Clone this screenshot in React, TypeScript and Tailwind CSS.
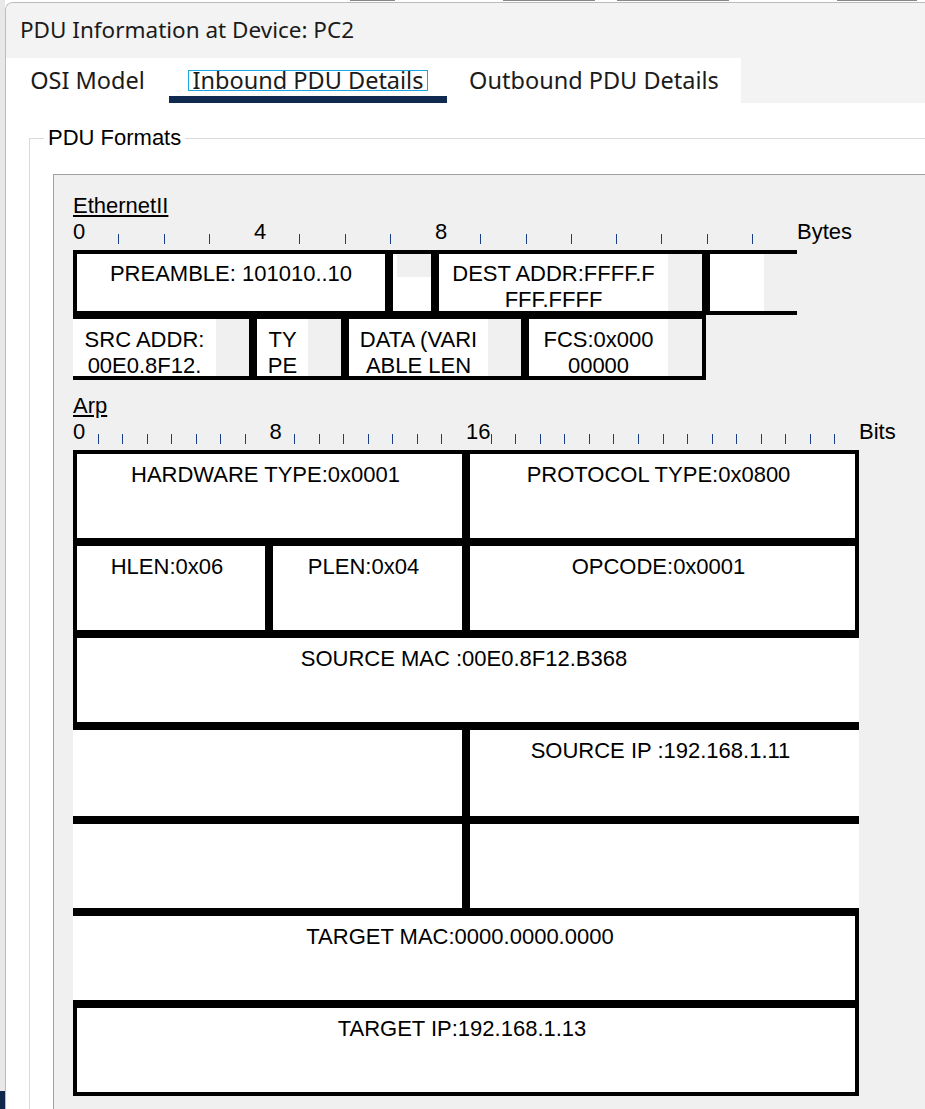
import React from 'react';

const ETH_LABELS: Record<number, string> = { 0: '0', 4: '4', 8: '8' };
const ARP_LABELS: Record<number, string> = { 0: '0', 8: '8', 16: '16' };

interface RulerProps {
    count: number;
    slot: string;
    labels: Record<number, string>;
    unit: string;
}

// one slot per byte/bit, label or tick at its left edge
const Ruler: React.FC<RulerProps> = ({ count, slot, labels, unit }) => (
    <div className="flex h-[26px] items-end leading-[26px]">
        {Array.from({ length: count }, (_, i) => (
            <div key={i} className={`${slot} flex h-full shrink-0 items-end`}>
                {labels[i] ? <span>{labels[i]}</span> : <span className="mb-[1px] h-[10px] w-px bg-[#1a3f87]" />}
            </div>
        ))}
        <span>{unit}</span>
    </div>
);

interface SplitProps {
    box: string;
    area: string;
    pad: string;
    lines?: string[];
}

// ethernet field: white text area, grey remainder
const Split: React.FC<SplitProps> = ({ box, area, pad, lines = [] }) => (
    <div className={`${box} flex shrink-0 border-black`}>
        <div className={`${area} whitespace-nowrap bg-white text-center ${pad}`}>
            {lines.map((l) => (
                <div key={l}>{l}</div>
            ))}
        </div>
        <div className="flex-1 bg-[#f0f0f0]" />
    </div>
);

const ArpBox: React.FC<{ box: string; text?: string }> = ({ box, text }) => (
    <div className={`${box} shrink-0 whitespace-nowrap border-black bg-white pr-2 pt-2 text-center`}>{text}</div>
);

const App: React.FC = () => {
    return (
        <div className="flex h-[1109px] w-[925px] overflow-hidden bg-white">
            {/* desktop behind the window */}
            <div className="flex w-[5px] shrink-0 flex-col bg-[#e8e8e8]">
                <div className="flex-1" />
                <div className="h-[18px] bg-[#10294b]" />
            </div>

            <div className="flex min-w-0 flex-1 flex-col">
                {/* bottoms of the app's header labels peeking above the window */}
                <div className="flex h-[2px] items-start bg-white">
                    <div className="ml-[345px] h-px w-[45px] bg-[#888]" />
                    <div className="ml-[108px] h-px w-[92px] bg-[#888]" />
                    <div className="ml-[22px] h-px w-[112px] bg-[#888]" />
                    <div className="ml-[108px] h-px w-[80px] bg-[#888]" />
                </div>

                <div className="flex flex-1 flex-col overflow-hidden rounded-tl-[8px] border-l border-t border-[#bcbcbc] bg-white">
                    <div className="flex h-[55px] shrink-0 items-center bg-[#f3f3f3] pb-[2px] pl-[14px] font-['Noto_Sans',sans-serif] text-[22.5px] text-[#1b1b1b]">
                        PDU Information at Device: PC2
                    </div>

                    <div className="flex h-[45px] shrink-0 bg-[#f3f3f3] font-['Noto_Sans',sans-serif] text-[23.5px] leading-[19px] text-[#1b1b1b]">
                        <div className="flex w-[735px] bg-white">
                            <div className="w-[163px] pt-[12px] text-center">
                                <span className="inline-block border border-transparent px-[4px]">OSI Model</span>
                            </div>
                            <div className="w-[278px] border-b-[7px] border-[#0f2a4e] pt-[12px] text-center">
                                <span className="inline-block border border-[#1aa7e0] px-[4px]">Inbound PDU Details</span>
                            </div>
                            <div className="w-[294px] pt-[12px] text-center">
                                <span className="inline-block border border-transparent px-[4px]">Outbound PDU Details</span>
                            </div>
                        </div>
                    </div>

                    <div className="flex-1 bg-white pl-[23px] pt-[22px] font-['Liberation_Sans',Arial,sans-serif] text-[22px] leading-[26px] text-black">
                        <fieldset className="min-w-0 border-l border-t border-[#dadada]">
                            <legend className="ml-[14px] px-[4px]">PDU Formats</legend>

                            <div className="ml-[23px] mt-[23px] border-l border-t border-[#a0a0a0] bg-[#f0f0f0] pb-[60px] pl-[19px] pt-[18px]">
                                {/* Ethernet II */}
                                <div className="underline">EthernetII</div>
                                <Ruler count={16} slot="w-[45.25px]" labels={ETH_LABELS} unit="Bytes" />

                                <div className="mt-[5px] flex h-[65px]">
                                    <Split box="w-[316px] border-4" area="w-[308px]" pad="pt-[7px]" lines={['PREAMBLE: 101010..10']} />
                                    <div className="flex w-[46px] shrink-0 flex-col border-4 border-black">
                                        <div className="flex h-[23px]">
                                            <div className="w-[4px] bg-white" />
                                            <div className="flex-1 bg-[#f0f0f0]" />
                                        </div>
                                        <div className="flex-1 bg-white" />
                                    </div>
                                    <Split box="w-[271px] border-4" area="w-[229px]" pad="pt-[7px]" lines={['DEST ADDR:FFFF.F', 'FFF.FFFF']} />
                                    <Split box="w-[91px] border-y-4 border-l-4" area="w-[54px]" pad="" />
                                </div>

                                <div className="flex h-[65px]">
                                    <Split box="w-[180px] border-y-4 border-r-4" area="w-[143px]" pad="pt-[8px]" lines={['SRC ADDR:', '00E0.8F12.']} />
                                    <Split box="w-[92px] border-4" area="w-[51px]" pad="pt-[8px]" lines={['TY', 'PE']} />
                                    <Split box="w-[180px] border-4" area="w-[139px]" pad="pt-[8px]" lines={['DATA (VARI', 'ABLE LEN']} />
                                    <Split box="w-[181px] border-4" area="w-[139px]" pad="pt-[8px]" lines={['FCS:0x000', '00000']} />
                                </div>

                                {/* Arp */}
                                <div className="mt-[13px] underline">Arp</div>
                                <Ruler count={32} slot="w-[24.5625px]" labels={ARP_LABELS} unit="Bits" />

                                <div className="mt-[5px]">
                                    <div className="flex h-[92px]">
                                        <ArpBox box="w-[393px] border-4" text="HARDWARE TYPE:0x0001" />
                                        <ArpBox box="w-[393px] border-4" text="PROTOCOL TYPE:0x0800" />
                                    </div>
                                    <div className="flex h-[92px]">
                                        <ArpBox box="w-[196px] border-4" text="HLEN:0x06" />
                                        <ArpBox box="w-[197px] border-4" text="PLEN:0x04" />
                                        <ArpBox box="w-[393px] border-4" text="OPCODE:0x0001" />
                                    </div>
                                    <div className="flex h-[92px]">
                                        <ArpBox box="w-[786px] border-y-4 border-l-4" text="SOURCE MAC :00E0.8F12.B368" />
                                    </div>
                                    <div className="flex h-[94px]">
                                        <ArpBox box="w-[393px] border-y-4 border-r-4" />
                                        <ArpBox box="w-[393px] border-y-4 border-l-4" text="SOURCE IP :192.168.1.11" />
                                    </div>
                                    <div className="flex h-[92px]">
                                        <ArpBox box="w-[393px] border-y-4 border-r-4" />
                                        <ArpBox box="w-[393px] border-y-4 border-l-4" />
                                    </div>
                                    <div className="flex h-[92px]">
                                        <ArpBox box="w-[786px] border-y-4 border-r-4" text="TARGET MAC:0000.0000.0000" />
                                    </div>
                                    <div className="flex h-[92px]">
                                        <ArpBox box="w-[786px] border-4" text="TARGET IP:192.168.1.13" />
                                    </div>
                                </div>
                            </div>
                        </fieldset>
                    </div>
                </div>
            </div>
        </div>
    );
};

export default App;
